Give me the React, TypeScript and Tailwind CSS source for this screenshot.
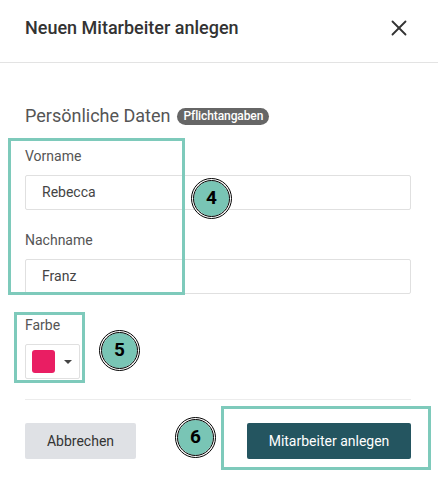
import { X } from "lucide-react";

const Marker = ({ n, className }: { n: number; className: string }) => (
  <div
    className={`absolute size-[41px] rounded-full border-[3px] border-double border-black bg-[#79c5b5] bg-clip-padding flex items-center justify-center text-[19px] font-bold text-black ${className}`}
  >
    {n}
  </div>
);

const App = () => {
  return (
    <div className="relative w-[438px] h-[481px] bg-white font-['Roboto',sans-serif] overflow-hidden">
      {/* Header */}
      <div className="flex justify-between items-start h-[63px] pt-[16px] pl-[25px] pr-[26px] border-b border-[#e3e3e3]">
        <h3 className="text-[18px] leading-[24px] font-medium text-[#333]">
          Neuen Mitarbeiter anlegen
        </h3>
        <X size={26} strokeWidth={1.7} className="text-[#333] -mt-[1px]" />
      </div>

      {/* Body */}
      <div className="pl-[25px] pr-[27px]">
        <div className="flex items-center gap-[7px] mt-[41px]">
          <span className="text-[18px] leading-[24px] text-[#555]">Persönliche Daten</span>
          <span className="h-[17px] px-[6px] rounded-full bg-[#666] text-white text-[12px] leading-[17px] font-medium tracking-[-0.1px]">
            Pflichtangaben
          </span>
        </div>

        <div className="mt-[18px] text-[14px] leading-[20px] text-[#555]">Vorname</div>
        <div className="mt-[9px] h-[35px] border border-[#e0e0e0] rounded-[2px] px-[16px] flex items-center text-[14px] text-[#444]">
          Rebecca
        </div>

        <div className="mt-[20px] text-[14px] leading-[20px] text-[#555]">Nachname</div>
        <div className="mt-[9px] h-[35px] border border-[#e0e0e0] rounded-[2px] px-[16px] flex items-center text-[14px] text-[#444]">
          Franz
        </div>

        <div className="mt-[21px] text-[14px] leading-[20px] text-[#555]">Farbe</div>
        <div className="mt-[9px] w-[55px] h-[35px] border border-[#e0e0e0] rounded-[2px] flex items-center pl-[6px] gap-[9px]">
          <div className="size-[23px] rounded-[3px] bg-[#e91e63]" />
          <div className="w-0 h-0 border-l-[4px] border-r-[4px] border-t-[4px] border-l-transparent border-r-transparent border-t-[#444]" />
        </div>

        <div className="mt-[20px] h-px bg-[#ececec]" />

        <div className="mt-[23px] flex justify-between">
          <button className="h-[36px] w-[111px] rounded-[2px] bg-[#dfe1e5] text-[14px] text-[#333]">
            Abbrechen
          </button>
          <button className="h-[36px] w-[164px] rounded-[2px] bg-[#245560] text-[14px] text-white">
            Mitarbeiter anlegen
          </button>
        </div>
      </div>

      {/* Annotations */}
      <div className="absolute left-[8px] top-[138px] w-[177px] h-[157px] border-[3px] border-[#7ecabb]" />
      <div className="absolute left-[14px] top-[312px] w-[71px] h-[71px] border-[3px] border-[#7ecabb]" />
      <div className="absolute left-[221px] top-[406px] w-[210px] h-[64px] border-[3px] border-[#7ecabb]" />
      <Marker n={4} className="left-[191px] top-[178px]" />
      <Marker n={5} className="left-[99px] top-[330px]" />
      <Marker n={6} className="left-[175px] top-[417px]" />
    </div>
  );
};

export default App;
